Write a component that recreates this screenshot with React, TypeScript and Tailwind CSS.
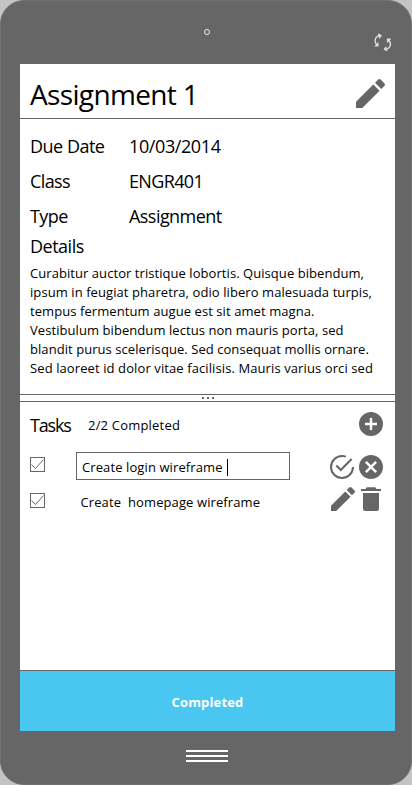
function Pencil({ className }: { className: string }) {
  return (
    <svg viewBox="0 0 29 29" fill="#666" className={className}>
      <path d="M0 22.700 17.300 5.400 23.600 11.700 6.300 29H0zM19 3.700l3-3a2 2 0 0 1 2.800 0l3.500 3.500a2 2 0 0 1 0 2.800l-3 3z" />
    </svg>
  );
}

function PlusCircle() {
  return (
    <svg viewBox="2 2 20 20" fill="#666" className="size-6">
      <path d="M17 13h-4v4h-2v-4H7v-2h4V7h2v4h4m-5-9A10 10 0 0 0 2 12a10 10 0 0 0 10 10 10 10 0 0 0 10-10A10 10 0 0 0 12 2z" />
    </svg>
  );
}

function CloseCircle() {
  return (
    <svg viewBox="2 2 20 20" fill="#666" className="size-6">
      <path d="M12 2C6.47 2 2 6.47 2 12s4.47 10 10 10 10-4.47 10-10S17.53 2 12 2zm5 13.59L15.59 17 12 13.41 8.41 17 7 15.59 10.59 12 7 8.41 8.41 7 12 10.59 15.59 7 17 8.41 13.41 12 17 15.59z" />
    </svg>
  );
}

function CheckCircle() {
  return (
    <svg viewBox="2 2 20 20" fill="#666" className="size-6">
      <path d="M20.300 12A8.300 8.300 0 1 1 12 3.700c.9 0 1.700.13 2.500.4l1.270-1.360A9.800 9.800 0 0 0 12 2a10 10 0 1 0 10 10M7.91 10.08 6.700 11.300 11 15.700 20.600 6l-1.200-1.200L11 13.300l-3.09-3.220z" />
    </svg>
  );
}

function Trash() {
  return (
    <svg viewBox="0 0 20 24" fill="#666" className="h-6 w-5">
      <path d="M0 2h4.500l1.300-1.700h8.400L15.500 2H20v2H0zM2 6h16v15.500a2.500 2.500 0 0 1-2.500 2.500h-11A2.500 2.500 0 0 1 2 21.500z" />
    </svg>
  );
}

function Sync() {
  return (
    <svg viewBox="0 0 18 18" fill="none" stroke="#e4e4e4" strokeWidth="1.3" className="size-[18px]">
      <path d="M6.500 2.700C.4 3.100-.1 8.800 3 12.300M.7 12.800h3.200V9.600M4 1.200 7 2.600 5.200 5.200" />
      <path d="M11 16.300c6.100-.4 6.600-6.100 3.500-9.600M16.800 6.200h-3.200v3.200M13.300 17.800l-2.800-1.500 1.700-2.500" />
    </svg>
  );
}

function Checkbox() {
  return (
    <svg viewBox="0 0 15 15" fill="none" stroke="#666" className="size-[15px]">
      <rect x=".5" y=".5" width="14" height="14" />
      <path d="M1.500 7.500 5.500 11.500 13.500 2.500" />
    </svg>
  );
}

const FIELDS = [
  { label: "Due Date", value: "10/03/2014", labelTrack: "tracking-[-0.5px]", valueTrack: "tracking-[-0.4px]" },
  { label: "Class", value: "ENGR401", labelTrack: "tracking-[-0.6px]", valueTrack: "tracking-[-0.65px]" },
  { label: "Type", value: "Assignment", labelTrack: "tracking-[-0.55px]", valueTrack: "tracking-[-0.55px]" },
];

const DETAILS = [
  { text: "Curabitur auctor tristique lobortis. Quisque bibendum,", track: "tracking-[0.06px]" },
  { text: "ipsum in feugiat pharetra, odio libero malesuada turpis,", track: "tracking-[0.08px]" },
  { text: "tempus fermentum augue est sit amet magna.", track: "tracking-[0.08px]" },
  { text: "Vestibulum bibendum lectus non mauris porta, sed", track: "tracking-[0.07px]" },
  { text: "blandit purus scelerisque. Sed consequat mollis ornare.", track: "tracking-[0.06px]" },
  { text: "Sed laoreet id dolor vitae facilisis. Mauris varius orci sed", track: "tracking-[0.1px]" },
];

export default function App() {
  return (
    <div className="h-[785px] w-[412px] bg-[#c3c3c3] font-['Open_Sans','Noto_Sans',sans-serif] text-black">
      <div className="flex h-full flex-col rounded-[24px] border border-[#707070] bg-[#666] pr-4 pl-[19px]">
        <header className="flex h-[63px] shrink-0 justify-end">
          <div className="mt-7 mr-[164px] size-[6px] rounded-full border border-[#eee]" />
          <div className="mt-8 mr-[3px]">
            <Sync />
          </div>
        </header>

        <main className="flex h-[667px] w-[375px] shrink-0 flex-col bg-white">
          <div className="flex h-[55px] shrink-0 justify-between border-b border-[#666] pr-[10px] pl-[10px]">
            <h1 className="mt-[10px] text-[28px] leading-[40px] tracking-[-0.65px] whitespace-nowrap">Assignment 1</h1>
            <Pencil className="mt-[15px] size-[29px]" />
          </div>

          <section className="h-[275px] shrink-0 pt-[10px] pl-[10px]">
            {FIELDS.map((f) => (
              <div key={f.label} className="flex h-[35px] text-[18px] leading-[35px] whitespace-nowrap">
                <span className={`w-[99px] ${f.labelTrack}`}>{f.label}</span>
                <span className={f.valueTrack}>{f.value}</span>
              </div>
            ))}
            <h2 className="h-[30px] text-[18px] leading-[24px] tracking-[-0.5px]">Details</h2>
            {DETAILS.map((d) => (
              <p key={d.text} className={`text-[13px] leading-[19px] whitespace-nowrap ${d.track}`}>
                {d.text}
              </p>
            ))}
          </section>

          <div className="flex h-2 shrink-0 items-center justify-center gap-[3px] border-y border-[#666]">
            <i className="size-[2px] bg-[#666]" />
            <i className="size-[2px] bg-[#666]" />
            <i className="size-[2px] bg-[#666]" />
          </div>

          <section className="flex-1 pl-[10px]">
            <div className="flex h-[50px] whitespace-nowrap">
              <h2 className="w-[58px] pt-[10px] text-[18px] leading-[26px] tracking-[-1.2px]">Tasks</h2>
              <span className="flex-1 pt-[13px] text-[13px] leading-[20px] tracking-[0.2px]">2/2 Completed</span>
              <div className="mt-[10px] mr-3">
                <PlusCircle />
              </div>
            </div>
            <div className="flex h-[35px] whitespace-nowrap">
              <div className="mt-[5px] w-[46px]">
                <Checkbox />
              </div>
              <div className="flex h-[28px] w-[214px] items-center border border-[#666] pt-[2px] pl-[5px] text-[13px] leading-[28px]">
                <span className="w-[145px] tracking-[0.1px]">Create login wireframe</span>
                <span className="h-[17px] w-px bg-black" />
              </div>
              <div className="mt-[3px] ml-10 flex gap-[5px]">
                <CheckCircle />
                <CloseCircle />
              </div>
            </div>
            <div className="flex whitespace-nowrap">
              <div className="mt-[6px] w-[50.5px]">
                <Checkbox />
              </div>
              <span className="mt-[5px] w-[250.5px] text-[13px] leading-[20px] tracking-[0.1px] whitespace-pre">
                {"Create  homepage wireframe"}
              </span>
              <Pencil className="size-6" />
              <div className="ml-[6px]">
                <Trash />
              </div>
            </div>
          </section>

          <button className="h-[61px] shrink-0 border-t border-[#666] bg-[#4ac7f1] pt-px text-[13px] leading-[20px] font-bold tracking-[0.15px] text-white">
            Completed
          </button>
        </main>

        <footer className="flex flex-col items-center gap-[3px] pt-[19px] pr-px">
          <i className="h-[2px] w-[42px] bg-white" />
          <i className="h-[2px] w-[42px] bg-white" />
          <i className="h-[2px] w-[42px] bg-white" />
        </footer>
      </div>
    </div>
  );
}
